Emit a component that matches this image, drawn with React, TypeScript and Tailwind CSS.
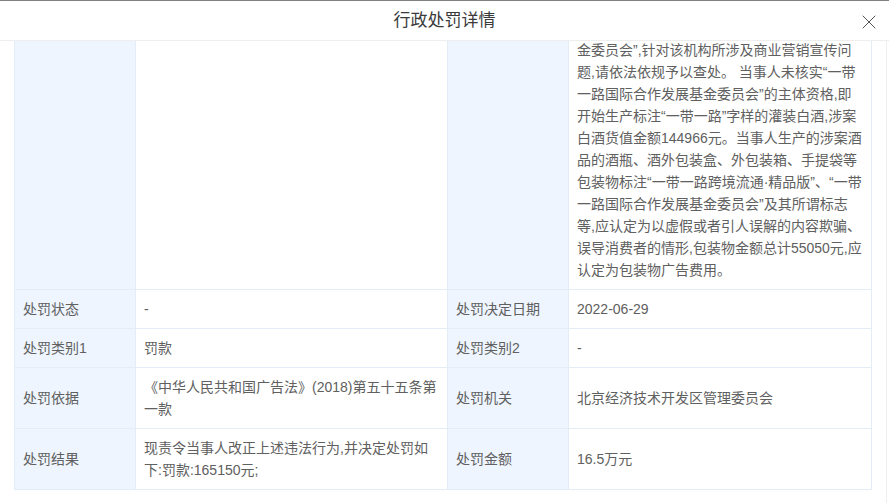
import { X } from "lucide-react";

const font = { fontFamily: '"Liberation Sans", "Noto Sans CJK SC", sans-serif' };

const detailLines = [
  "金委员会”,针对该机构所涉及商业营销宣传问",
  "题,请依法依规予以查处。 当事人未核实“一带",
  "一路国际合作发展基金委员会”的主体资格,即",
  "开始生产标注“一带一路”字样的灌装白酒,涉案",
  "白酒货值金额144966元。当事人生产的涉案酒",
  "品的酒瓶、酒外包装盒、外包装箱、手提袋等",
  "包装物标注“一带一路跨境流通·精品版”、“一带",
  "一路国际合作发展基金委员会”及其所谓标志",
  "等,应认定为以虚假或者引人误解的内容欺骗、",
  "误导消费者的情形,包装物金额总计55050元,应",
  "认定为包装物广告费用。",
];

const rows: [string, string[], string, string[]][] = [
  ["处罚状态", ["-"], "处罚决定日期", ["2022-06-29"]],
  ["处罚类别1", ["罚款"], "处罚类别2", ["-"]],
  ["处罚依据", ["《中华人民共和国广告法》(2018)第五十五条第", "一款"], "处罚机关", ["北京经济技术开发区管理委员会"]],
  ["处罚结果", ["现责令当事人改正上述违法行为,并决定处罚如", "下:罚款:165150元;"], "处罚金额", ["16.5万元"]],
];

function Label({ text }: { text?: string }) {
  return (
    <div className="flex items-center px-2 py-2 bg-[#eef5fe] border-r border-b border-[#e3edf8] text-[#606060] whitespace-nowrap">
      {text}
    </div>
  );
}

function Value({ lines }: { lines: string[] }) {
  return (
    <div className="flex flex-col justify-center px-2 py-2 border-r border-b border-[#e3edf8] text-[#606060]">
      {lines.map((l, i) => (
        <div key={i} className="whitespace-nowrap">{l}</div>
      ))}
    </div>
  );
}

export default function App() {
  return (
    <div className="w-[889px] h-[503px] flex flex-col bg-white overflow-hidden" style={font}>
      {/* Header */}
      <div className="relative h-[41px] shrink-0 flex items-center justify-center border-t border-b border-t-[#808080] border-b-[#eeeeee]">
        <span className="text-[17px] text-[#3a3a3a]">行政处罚详情</span>
        <X size={24} strokeWidth={1} className="absolute right-[8px] top-[9px] text-[#555]" />
      </div>

      {/* Body (scrolled) */}
      <div className="flex flex-1 min-h-0">
        <div className="flex-1 px-[14px] overflow-hidden">
          <div className="-mt-[2px] grid grid-cols-[121px_312px_121px_1fr] border-l border-[#e3edf8] text-[14px] leading-[22px]">
            <Label />
            <div className="border-r border-b border-[#e3edf8]" />
            <Label />
            <div className="px-2 pb-2 border-r border-b border-[#e3edf8] text-[#606060]">
              {detailLines.map((l, i) => (
                <div key={i} className="whitespace-nowrap">{l}</div>
              ))}
            </div>

            {rows.map(([l1, v1, l2, v2]) => (
              <div key={l1} className="contents">
                <Label text={l1} />
                <Value lines={v1} />
                <Label text={l2} />
                <Value lines={v2} />
              </div>
            ))}
          </div>
        </div>
        <div className="w-[3px] border-l border-[#eeeeee]" />
      </div>
    </div>
  );
}
